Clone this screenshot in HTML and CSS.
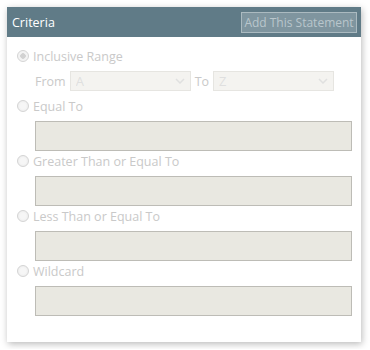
FILE: index.html
```html
<!DOCTYPE html>
<html lang="en">
  <head>
    <meta charset="UTF-8" />
    <meta name="viewport" content="width=device-width" />
    <title>Criteria</title>
    <link rel="stylesheet" href="styles.css">
  </head>
  <body>
    <div class="panel">
      <div class="panel-header">
        <span class="panel-title">Criteria</span>
        <button class="add-btn" disabled>Add This Statement</button>
      </div>
      <form class="panel-body">
        <label class="option"><input type="radio" name="criteria" checked disabled /> Inclusive Range</label>
        <div class="range-row">
          <span>From</span>
          <select class="range-select" disabled><option>A</option></select>
          <span>To</span>
          <select class="range-select" disabled><option>Z</option></select>
        </div>
        <label class="option"><input type="radio" name="criteria" disabled /> Equal To</label>
        <input type="text" class="field" disabled />
        <label class="option"><input type="radio" name="criteria" disabled /> Greater Than or Equal To</label>
        <input type="text" class="field" disabled />
        <label class="option"><input type="radio" name="criteria" disabled /> Less Than or Equal To</label>
        <input type="text" class="field" disabled />
        <label class="option"><input type="radio" name="criteria" disabled /> Wildcard</label>
        <input type="text" class="field" disabled />
      </form>
    </div>
  </body>
</html>
```

FILE: styles.css
```css
body {
  margin: 0;
  background: #fff;
  font-family: "Open Sans", "Liberation Sans", sans-serif;
}
.panel {
  margin: 7px;
  width: 354px;
  height: 335px;
  box-sizing: border-box;
  background: #fff;
  box-shadow: 1px 2px 7px rgba(0, 0, 0, 0.28);
}
.panel-header {
  height: 30px;
  background: #607b87;
  display: flex;
  align-items: center;
  justify-content: space-between;
  padding: 0 4px 0 5px;
}
.panel-title {
  color: #fff;
  font-size: 12.5px;
}
.add-btn {
  height: 21px;
  width: 116px;
  padding: 0;
  font-family: inherit;
  font-size: 12px;
  color: #b9c6cc;
  background: rgba(255, 255, 255, 0.2);
  border: 1px solid rgba(255, 255, 255, 0.35);
  border-radius: 0;
}
.panel-body {
  display: flex;
  flex-direction: column;
  padding: 9px 9px 0 10px;
  color: #c9c9c9;
  font-size: 12.5px;
}
.option {
  display: flex;
  align-items: center;
  gap: 4px;
  height: 20px;
}
.option input {
  appearance: none;
  margin: 0;
  width: 12px;
  height: 12px;
  border-radius: 50%;
  border: 1px solid #d4d4d4;
  background: radial-gradient(circle, #f6f6f6 40%, #e8e8e8 100%);
  box-sizing: border-box;
}
.option input:checked {
  background: radial-gradient(circle, #d2d2d2 0 2.5px, #f3f3f3 3px);
}
.range-row {
  display: flex;
  align-items: center;
  gap: 4px;
  margin: 5px 0 5px 18px;
}
.range-select {
  appearance: none;
  width: 121px;
  height: 20px;
  padding: 0 5px;
  font-family: inherit;
  font-size: 13px;
  color: #d2d2d2;
  border: 1px solid #dcdbd5;
  border-radius: 0;
  background: #f0efea url("data:image/svg+xml,%3Csvg xmlns='http://www.w3.org/2000/svg' width='10' height='6'%3E%3Cpath d='M1 1l4 4 4-4' fill='none' stroke='%23d4d4d4' stroke-width='1.5'/%3E%3C/svg%3E") no-repeat right 5px center;
}
.field {
  margin: 5px 0 0 18px;
  height: 30px;
  box-sizing: border-box;
  border: 1px solid #bdbcb6;
  background: #e9e8e1;
  border-radius: 0;
}
```
